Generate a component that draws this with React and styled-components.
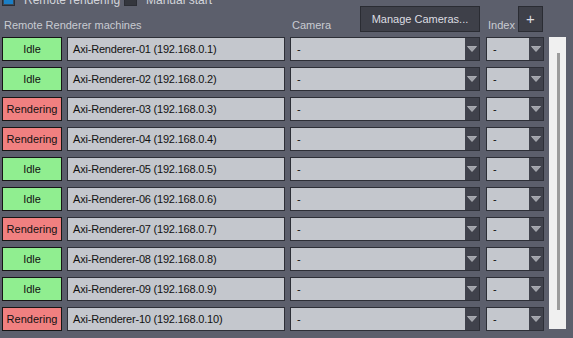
import React from "react";
import styled, { createGlobalStyle } from "styled-components";

const Global = createGlobalStyle`
  html, body { margin: 0; padding: 0; background: #5c5f6c; overflow: hidden; }
  body { font-family: "Liberation Sans", Arial, sans-serif; font-size: 11px; }
`;

const Page = styled.div`
  width: 573px;
  height: 338px;
  margin-top: -7px;
  padding-left: 2px;
  box-sizing: border-box;
`;

const TopBar = styled.div`
  display: flex;
  align-items: center;
  height: 13px;
`;

const CheckItem = styled.label`
  display: flex;
  align-items: center;
  gap: 9px;
  width: ${(p) => p.$w}px;
  color: #d2d4da;
  font-size: 12px;
`;

const Box = styled.span`
  width: 13px;
  height: 13px;
  box-sizing: border-box;
  border: 1px solid #2b2d34;
  background: ${(p) => (p.$on ? "#1b7fc6" : "#34363d")};
  box-shadow: ${(p) => (p.$on ? "inset 0 0 0 1px #3a4a5a" : "none")};
`;

const Columns = `
  display: grid;
  grid-template-columns: 60px 218px 191px 58px 17px;
  column-gap: 5px;
`;

const Header = styled.div`
  ${Columns}
  height: 26px;
  align-items: end;
  margin-bottom: 5px;
`;

const Label = styled.span`
  color: #c9cbd2;
  font-size: 11px;
  padding-left: ${(p) => p.$pad || 2}px;
  padding-bottom: 1px;
  grid-column: ${(p) => p.$span || "auto"};
`;

const HeadCell = styled.div`
  display: flex;
  justify-content: space-between;
  align-items: flex-end;
  height: 26px;
  padding-right: ${(p) => p.$pr || 0}px;
`;

const DarkButton = styled.button`
  height: 26px;
  width: ${(p) => p.$w}px;
  box-sizing: border-box;
  background: #3e4049;
  border: 1px solid #2a2c33;
  color: #dcdde2;
  font-family: "Liberation Sans", Arial, sans-serif;
  font-size: ${(p) => p.$fs || 11}px;
  padding: 0;
  padding-bottom: ${(p) => p.$pb || 0}px;
  display: flex;
  align-items: center;
  justify-content: center;
`;

const List = styled.div`
  ${Columns}
  grid-auto-rows: 24px;
  row-gap: 6px;
`;

const Status = styled.div`
  box-sizing: border-box;
  border: 1px solid #151515;
  background: ${(p) => (p.$busy ? "#f08080" : "#90ee90")};
  color: #111;
  display: flex;
  align-items: center;
  justify-content: center;
  font-size: 11px;
`;

const Field = styled.div`
  box-sizing: border-box;
  border: 1px solid #2d2f37;
  background: #c4c7cd;
  color: #111;
  display: flex;
  align-items: center;
  padding-left: 5px;
  font-size: 11px;
  letter-spacing: -0.2px;
  white-space: nowrap;
`;

const Combo = styled.div`
  box-sizing: border-box;
  width: ${(p) => p.$w}px;
  border: 1px solid #2d2f37;
  background: #c4c7cd;
  display: flex;
  align-items: stretch;
`;

const ComboText = styled.span`
  flex: 1;
  display: flex;
  align-items: center;
  padding-left: 6px;
  color: #111;
  font-size: 11px;
`;

const Arrow = styled.span`
  width: 14px;
  background: #40424c;
  display: flex;
  align-items: center;
  justify-content: center;
`;

const Scroll = styled.div`
  grid-column: 5;
  grid-row: 1 / span 10;
  margin-bottom: 2px;
  background: #f0f0f0;
  display: flex;
  justify-content: center;
  padding: 16px 0 19px;
`;

const Thumb = styled.div`
  width: 3px;
  background: #9c9c9c;
  margin-left: 1px;
`;

const Tri = () => (
  <svg width="10" height="6" viewBox="0 0 10 6">
    <path d="M0.5 0.5 L9.5 0.5 L5 5.5 Z" fill="#9fa1a8" stroke="#b8bac0" strokeWidth="0.8" />
  </svg>
);

const machines = [
  false, false, true, true, false, false, true, false, false, true,
];

export default function App() {
  return (
    <>
      <Global />
      <Page>
        <TopBar>
          <CheckItem $w={122}>
            <Box $on />
            Remote rendering
          </CheckItem>
          <CheckItem $w={120}>
            <Box />
            Manual start
          </CheckItem>
        </TopBar>
        <Header>
          <Label $span="1 / span 2">Remote Renderer machines</Label>
          <HeadCell $pr={1}>
            <Label>Camera</Label>
            <DarkButton $w={120}>Manage Cameras...</DarkButton>
          </HeadCell>
          <HeadCell $pr={1}>
            <Label>Index</Label>
            <DarkButton $w={25} $fs={15} $pb={2}>+</DarkButton>
          </HeadCell>
        </Header>
        <List>
          {machines.map((busy, i) => {
            const n = i + 1;
            return (
              <React.Fragment key={n}>
                <Status $busy={busy} style={{ gridRow: n, gridColumn: 1 }}>
                  {busy ? "Rendering" : "Idle"}
                </Status>
                <Field style={{ gridRow: n, gridColumn: 2 }}>
                  Axi-Renderer-{String(n).padStart(2, "0")} (192.168.0.{n})
                </Field>
                <Combo $w={190} style={{ gridRow: n, gridColumn: 3 }}>
                  <ComboText>-</ComboText>
                  <Arrow><Tri /></Arrow>
                </Combo>
                <Combo $w={58} style={{ gridRow: n, gridColumn: 4 }}>
                  <ComboText>-</ComboText>
                  <Arrow><Tri /></Arrow>
                </Combo>
              </React.Fragment>
            );
          })}
          <Scroll>
            <Thumb />
          </Scroll>
        </List>
      </Page>
    </>
  );
}
